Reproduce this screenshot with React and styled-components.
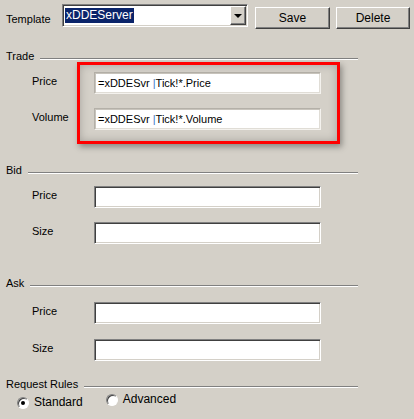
import React from "react";
import styled, { createGlobalStyle, css } from "styled-components";

const GlobalStyle = createGlobalStyle`
  body {
    margin: 0;
    background: #d4d0c8;
    font-family: "Liberation Sans", Arial, sans-serif;
    font-size: 11px;
    color: #000;
  }
`;

const sunken = css`
  border: 1px solid;
  border-color: #808080 #ffffff #ffffff #808080;
  box-shadow: inset 1px 1px 0 #404040, inset -1px -1px 0 #d4d0c8;
`;

const raised = css`
  border: 1px solid;
  border-color: #ffffff #404040 #404040 #ffffff;
  box-shadow: inset -1px -1px 0 #808080, inset 1px 1px 0 #d4d0c8;
  background: #d4d0c8;
`;

const Page = styled.div`
  width: 414px;
  height: 419px;
  overflow: hidden;
  line-height: 13px;
`;

const TopBar = styled.div`
  display: flex;
  align-items: flex-start;
  height: 29px;
  padding: 4px 0 0 6px;
  box-sizing: border-box;
`;

const TopLabel = styled.span`
  width: 56px;
  padding-top: 9px;
`;

const Combo = styled.div`
  ${sunken};
  width: 186px;
  height: 23px;
  box-sizing: border-box;
  background: #fff;
  display: flex;
  align-items: center;
  padding: 0 1px 0 2px;
`;

const Selected = styled.span`
  background: #0a246a;
  color: #fff;
  font-size: 12px;
  line-height: 15px;
  padding: 0 1px;
`;

const DropButton = styled.div`
  ${raised};
  margin-left: auto;
  width: 16px;
  height: 19px;
  box-sizing: border-box;
  display: flex;
  align-items: center;
  justify-content: center;
`;

const Arrow = styled.span`
  width: 0;
  height: 0;
  border-left: 4px solid transparent;
  border-right: 4px solid transparent;
  border-top: 4px solid #000;
`;

const Button = styled.button`
  ${raised};
  width: ${(p) => p.$width}px;
  height: 22px;
  margin: 3px 0 0 ${(p) => p.$gap}px;
  padding: 0;
  font: inherit;
  font-size: 12px;
  color: #000;
`;

const Section = styled.div`
  position: relative;
  margin-top: ${(p) => p.$top}px;
`;

const SectionHeader = styled.div`
  display: flex;
  width: 358px;
  padding-left: 6px;
  box-sizing: border-box;
  gap: 6px;
  height: 13px;
`;

const Rule = styled.div`
  flex: 1;
  align-self: flex-end;
  margin-bottom: 3px;
  border-top: 1px solid #808080;
  border-bottom: 1px solid #ffffff;
`;

const Row = styled.div`
  display: flex;
  align-items: flex-start;
  padding-left: 32px;
  margin-top: ${(p) => p.$top}px;
`;

const RowLabel = styled.span`
  width: 62px;
  padding-top: 3px;
`;

const TextBox = styled.div`
  ${sunken};
  ${(p) =>
    p.$soft &&
    css`
      border-color: #b4b0a8 #f4f2ee #f4f2ee #b4b0a8;
      box-shadow: inset 1px 1px 0 #c8c4bc, inset -1px -1px 0 #e0ddd6;
    `}
  width: 227px;
  height: 22px;
  box-sizing: border-box;
  background: #fff;
  display: flex;
  align-items: center;
  padding: 0 3px;
  white-space: pre;
`;

const Pipe = styled.span`
  color: #3a78c8;
`;

const Annotation = styled.div`
  position: absolute;
  left: 77px;
  top: 12px;
  width: 263px;
  height: 82px;
  box-sizing: border-box;
  border: 3px solid #ff0000;
  box-shadow: 2px 3px 6px rgba(0, 0, 0, 0.35), inset 0 0 9px rgba(0, 0, 0, 0.22);
  pointer-events: none;
`;

const RadioGroup = styled.div`
  display: flex;
  align-items: flex-start;
  padding-left: 17px;
  margin-top: 5px;
  gap: 23px;
`;

const RadioOption = styled.label`
  display: flex;
  align-items: center;
  gap: 5px;
  font-size: 12px;
  margin-top: ${(p) => (p.$lift ? -3 : 0)}px;
`;

const RadioCircle = styled.span`
  width: 12px;
  height: 12px;
  box-sizing: border-box;
  border-radius: 50%;
  background: #fff;
  border: 1px solid;
  border-color: #808080 #ffffff #ffffff #808080;
  box-shadow: inset 1px 1px 0 #404040;
  display: flex;
  align-items: center;
  justify-content: center;
`;

const Dot = styled.span`
  width: 4px;
  height: 4px;
  border-radius: 50%;
  background: #000;
`;

const Field = ({ label, top, soft, children }) => (
  <Row $top={top}>
    <RowLabel>{label}</RowLabel>
    <TextBox $soft={soft}>{children}</TextBox>
  </Row>
);

const Header = ({ children }) => (
  <SectionHeader>
    <span>{children}</span>
    <Rule />
  </SectionHeader>
);

const Radio = ({ label, checked, lift }) => (
  <RadioOption $lift={lift}>
    <RadioCircle>{checked && <Dot />}</RadioCircle>
    {label}
  </RadioOption>
);

export default function App() {
  return (
    <Page>
      <GlobalStyle />
      <TopBar>
        <TopLabel>Template</TopLabel>
        <Combo>
          <Selected>xDDEServer</Selected>
          <DropButton>
            <Arrow />
          </DropButton>
        </Combo>
        <Button $width={75} $gap={7}>Save</Button>
        <Button $width={74} $gap={6}>Delete</Button>
      </TopBar>

      <Section $top={21}>
        <Header>Trade</Header>
        <Field label="Price" top={9} soft>
          =xDDESvr <Pipe>|</Pipe>Tick!*.Price
        </Field>
        <Field label="Volume" top={14} soft>
          =xDDESvr <Pipe>|</Pipe>Tick!*.Volume
        </Field>
        <Annotation />
      </Section>

      <Section $top={34}>
        <Header>Bid</Header>
        <Field label="Price" top={9} />
        <Field label="Size" top={14} />
      </Section>

      <Section $top={33}>
        <Header>Ask</Header>
        <Field label="Price" top={12} />
        <Field label="Size" top={15} />
      </Section>

      <Section $top={17}>
        <Header>Request Rules</Header>
        <RadioGroup>
          <Radio label="Standard" checked />
          <Radio label="Advanced" lift />
        </RadioGroup>
      </Section>
    </Page>
  );
}
